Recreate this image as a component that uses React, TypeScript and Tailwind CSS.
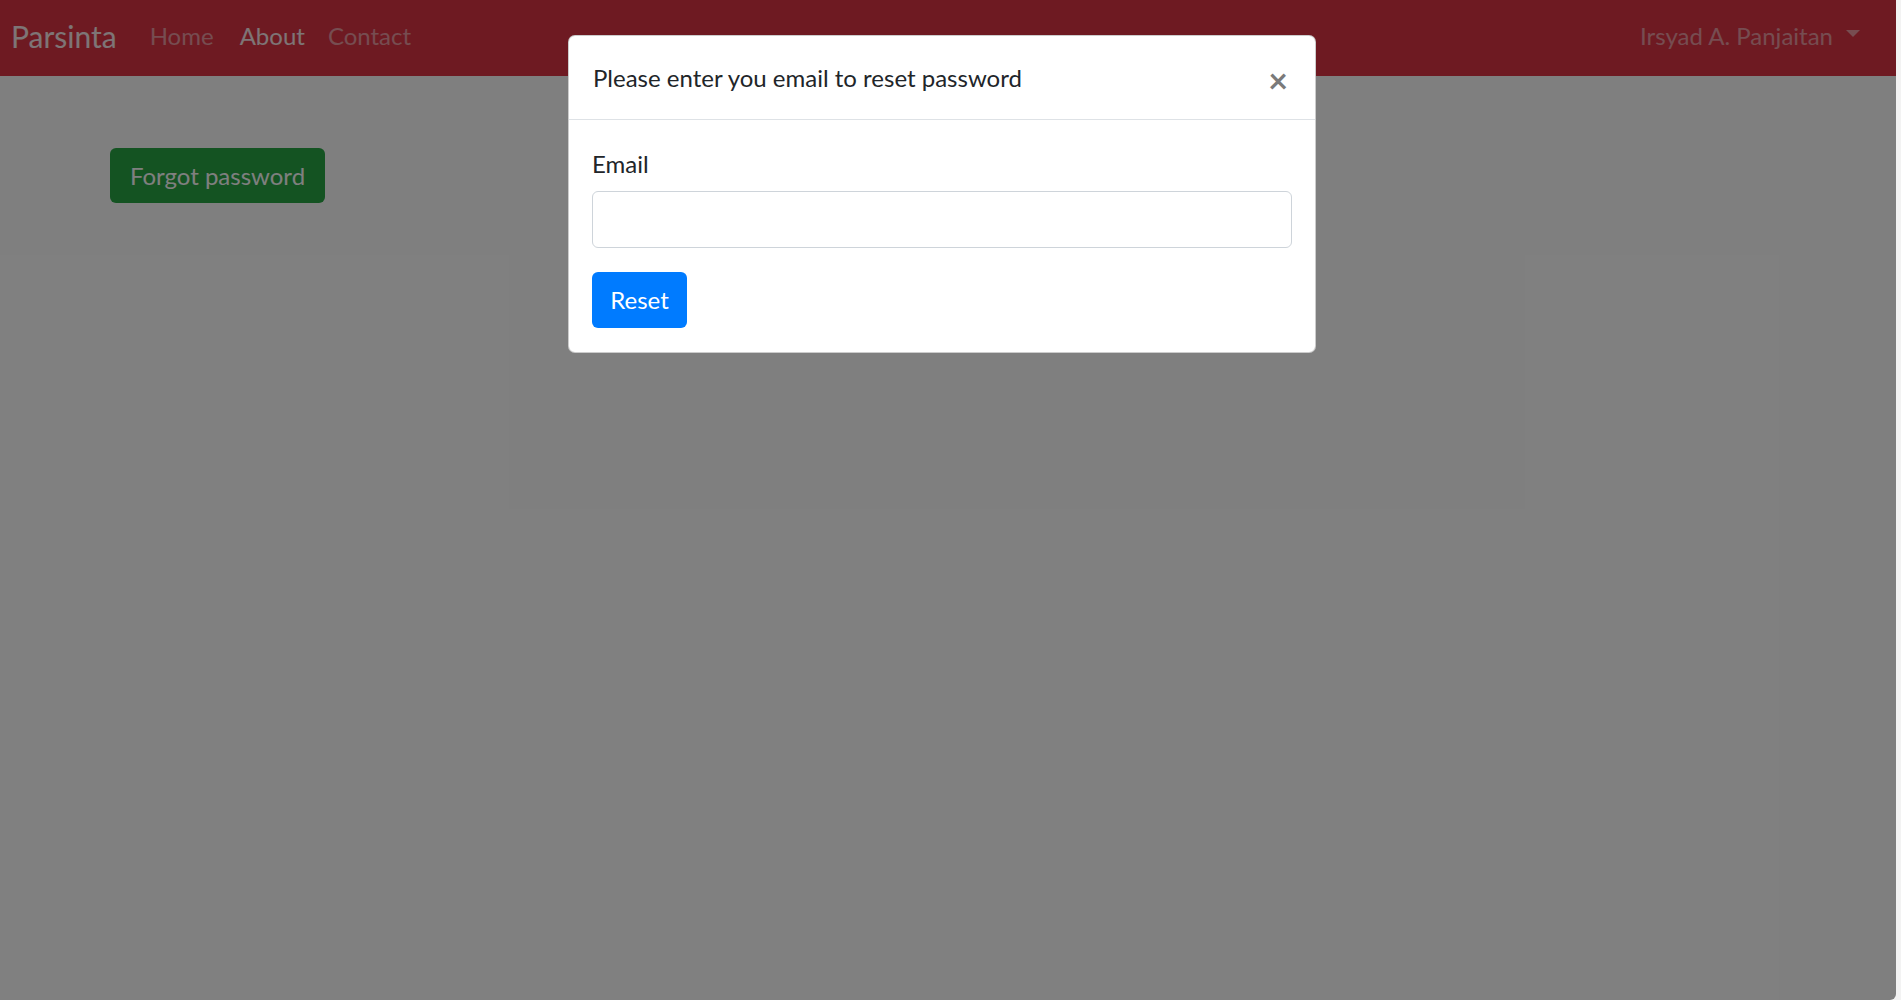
import React from "react";

export default function App() {
  const font = { fontFamily: '"Segoe UI", Lato, "Open Sans", "Liberation Sans", sans-serif' };
  return (
    <div className="flex w-full h-[1000px] bg-[#f3f3f3] overflow-hidden" style={font}>
      <div className="relative w-[1896px] h-full bg-white rounded-br-[6px] overflow-hidden">
        <nav className="h-[76px] bg-[#dc3545] flex items-center pl-[11px] pr-[36px] pb-[5px]">
          <span className="text-[30px] leading-none text-white/90 mr-[33px]">Parsinta</span>
          <div className="flex items-center text-[24px] leading-none">
            <span className="text-white/50 mr-[26px]">Home</span>
            <span className="text-white/90 mr-[23px]">About</span>
            <span className="text-white/50">Contact</span>
          </div>
          <div className="ml-auto flex items-center text-[24px] leading-none text-white/50">
            <span>Irsyad A. Panjaitan</span>
            <span className="ml-[13px] w-0 h-0 border-l-[7px] border-r-[7px] border-t-[7px] border-l-transparent border-r-transparent border-t-white/50 mb-[4px]" />
          </div>
        </nav>
        <div className="pl-[110px] pt-[72px]">
          <button className="h-[55px] w-[215px] rounded-[6px] bg-[#28a745] text-white text-[24px] leading-none">
            Forgot password
          </button>
        </div>

        <div className="absolute inset-0 bg-black/50" />

        <div className="absolute left-[568px] top-[35px] w-[748px] h-[318px] bg-white rounded-[7px] border border-black/20">
          <div className="h-[84px] border-b border-[#dee2e6] flex items-center justify-between pl-[24px] pr-[27px]">
            <span className="text-[24px] text-[#212529] leading-[36px]">Please enter you email to reset password</span>
            <span className="text-[#7a7a7a] text-[34px] font-bold leading-none mt-[4px]">×</span>
          </div>
          <div className="px-[23px] pt-[26px]">
            <div className="text-[24px] text-[#212529] leading-[36px]">Email</div>
            <div className="mt-[9px] h-[57px] w-full rounded-[6px] border border-[#ced4da] bg-white" />
            <button className="mt-[24px] h-[56px] w-[95px] rounded-[6px] bg-[#007bff] text-white text-[24px] leading-none">
              Reset
            </button>
          </div>
        </div>
      </div>
      <div className="flex-1 bg-[#f3f3f3]" />
    </div>
  );
}
